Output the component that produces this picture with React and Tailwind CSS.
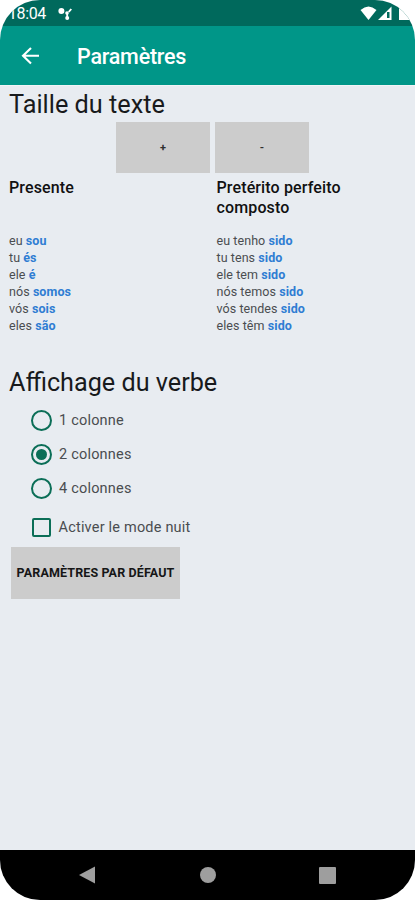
import { useState } from "react";

const columns = [
  {
    title: "Presente",
    rows: [
      ["eu", "sou"],
      ["tu", "és"],
      ["ele", "é"],
      ["nós", "somos"],
      ["vós", "sois"],
      ["eles", "são"],
    ],
  },
  {
    title: "Pretérito perfeito composto",
    rows: [
      ["eu tenho", "sido"],
      ["tu tens", "sido"],
      ["ele tem", "sido"],
      ["nós temos", "sido"],
      ["vós tendes", "sido"],
      ["eles têm", "sido"],
    ],
  },
];

const layouts = ["1 colonne", "2 colonnes", "4 colonnes"];

function StatusBar() {
  return (
    <div className="flex h-[26px] items-center bg-[#00695c] pl-[8px] text-white">
      <span className="w-[50px] pt-[2px] text-[16px] leading-none tracking-[-0.4px]">18:04</span>
      <svg className="mt-[2px]" width="14" height="14" viewBox="0 0 14 14" fill="currentColor">
        <circle cx="3.4" cy="4" r="3" />
        <circle cx="9" cy="6" r="1.8" />
        <circle cx="9.2" cy="11" r="2" />
        <path d="M8.3 6h1.8v5H8.3zM10 4.5l2.5-3 1.5 1-2.6 3z" />
      </svg>
      <svg className="ml-auto" width="55" height="16" viewBox="0 0 55 16" fill="currentColor">
        <path d="M.5 5Q8.500-2 16.500 5L8.500 15z" />
        <path d="M18 15 31.500 1.500V15z" />
        <path d="M27 7h2.500V13H27z" fill="#00695c" />
        <path d="M39 3h2V1h7v2h3v12H39z" />
      </svg>
    </div>
  );
}

function AppBar() {
  return (
    <header className="flex h-[59px] items-center bg-[#009688] pl-[21px] text-white">
      <svg width="20" height="20" viewBox="0 0 20 20" fill="none" stroke="currentColor" strokeWidth="2.100">
        <path d="M18 9.800H2.500M10 2 2 9.800l8 7.800" />
      </svg>
      <h1 className="ml-[36px] pt-[3px] text-[21.500px] leading-none font-medium tracking-[-0.22px]">Paramètres</h1>
    </header>
  );
}

function Radio({ label, checked, onSelect }) {
  return (
    <button onClick={onSelect} className="flex h-[34px] items-center">
      <span className="flex size-[21px] items-center justify-center rounded-full border-2 border-[#0b6e57]">
        {checked && <span className="size-[11px] rounded-full bg-[#0b6e57]" />}
      </span>
      <span className="ml-[7px] pt-[2px] text-[14.500px] tracking-[0.2px]">{label}</span>
    </button>
  );
}

export default function App() {
  const [layout, setLayout] = useState(1);
  const [night, setNight] = useState(false);

  return (
    <div className="h-[900px] w-[415px] bg-white font-['Roboto',sans-serif]">
      <div className="flex h-full flex-col overflow-hidden rounded-[40px] bg-[#e8ecf1]">
        <StatusBar />
        <AppBar />

        <main className="flex-1 border-t border-[#f1f4f6] text-[#4a4d50]">
          <h2 className="h-[36px] pt-[2px] pl-[9px] text-[25.300px] leading-[33px] text-[#181a1c]">Taille du texte</h2>

          {/* Text size */}
          <div className="flex gap-[5px] pl-[116px] text-[11px] font-bold text-[#303030]">
            <button className="h-[51px] w-[94px] bg-[#cccccc] pt-[2px]">+</button>
            <button className="h-[51px] w-[94px] bg-[#cccccc] pt-[2px]">-</button>
          </div>

          {/* Conjugation preview */}
          <div className="grid h-[191px] grid-cols-[207.500px_1fr] pt-[5px] pl-[9px]">
            {columns.map((col) => (
              <section key={col.title}>
                <h3 className="h-[54px] w-[150px] text-[16px] leading-[20px] font-medium tracking-[0.13px] text-[#111]">
                  {col.title}
                </h3>
                <ul className="text-[12.500px] leading-[17px] tracking-[0.07px]">
                  {col.rows.map(([subject, verb]) => (
                    <li key={subject}>
                      {subject} <b className="font-bold text-[#2f7dd3]">{verb}</b>
                    </li>
                  ))}
                </ul>
              </section>
            ))}
          </div>

          <h2 className="h-[39px] pt-[2px] pl-[9px] text-[25.200px] leading-[33px] text-[#181a1c]">
            Affichage du verbe
          </h2>

          {/* Column layout */}
          <div className="flex flex-col pl-[31px]">
            {layouts.map((label, i) => (
              <Radio key={label} label={label} checked={layout === i} onSelect={() => setLayout(i)} />
            ))}
            <button onClick={() => setNight(!night)} className="mt-[5px] flex h-[34px] items-center">
              <span className="ml-[1px] size-[19px] rounded-[2px] border-2 border-[#0b6e57]">
                {night && <span className="block h-full bg-[#0b6e57]" />}
              </span>
              <span className="ml-[7.500px] pt-[2px] text-[14.500px] tracking-[0.2px]">Activer le mode nuit</span>
            </button>
          </div>

          <button className="mt-[3px] ml-[11px] h-[52px] w-[169px] bg-[#cccccc] text-[12.500px] font-bold tracking-[0.12px] text-[#161616]">
            PARAMÈTRES PAR DÉFAUT
          </button>
        </main>

        {/* Android navigation */}
        <nav className="flex h-[50px] items-center bg-black pl-[79px]">
          <svg width="258" height="18" viewBox="0 0 258 18" fill="#9e9e9e">
            <path d="M0 9 16 .5v17z" />
            <circle cx="129" cy="9" r="8" />
            <rect x="240" y="1" width="17" height="17" rx="1" />
          </svg>
        </nav>
      </div>
    </div>
  );
}
